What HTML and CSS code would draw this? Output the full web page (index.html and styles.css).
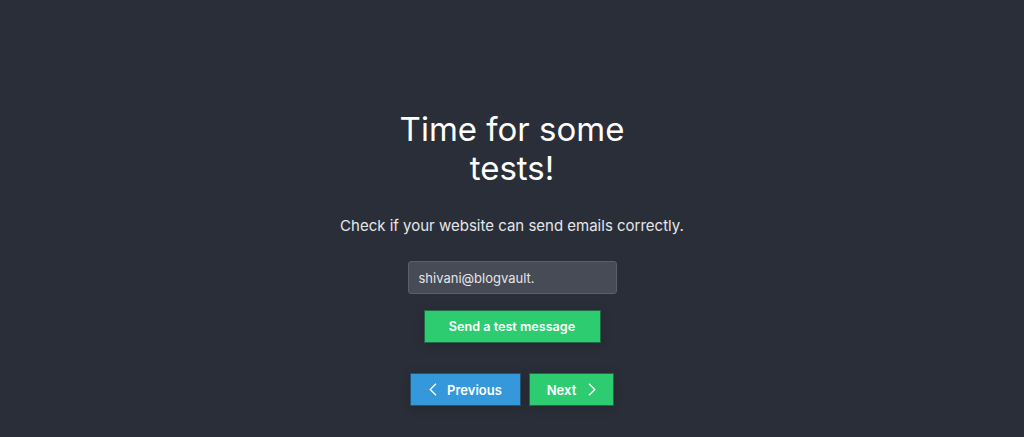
FILE: index.html
```html
<!DOCTYPE html>
<html lang="en">
<head>
<meta charset="utf-8">
<title>Time for some tests!</title>
<link rel="stylesheet" href="styles.css">
</head>
<body>
<main class="step">
  <h1 class="step-title">Time for some tests!</h1>
  <p class="step-text">Check if your website can send emails correctly.</p>
  <input class="email-input" type="text" value="shivani@blogvault.">
  <button class="btn btn-green btn-send" type="button">Send a test message</button>
  <div class="nav">
    <button class="btn btn-blue btn-prev" type="button">
      <svg class="chev" width="8" height="13" viewBox="0 0 8 13" aria-hidden="true"><path d="M7 0.7 L1.2 6.5 L7 12.3" fill="none" stroke="currentColor" stroke-width="1.3"/></svg>
      <span>Previous</span>
    </button>
    <button class="btn btn-green btn-next" type="button">
      <span>Next</span>
      <svg class="chev" width="8" height="13" viewBox="0 0 8 13" aria-hidden="true"><path d="M1 0.7 L6.8 6.5 L1 12.3" fill="none" stroke="currentColor" stroke-width="1.3"/></svg>
    </button>
  </div>
</main>
</body>
</html>
```

FILE: styles.css
```css
html, body {
  margin: 0;
  padding: 0;
  background: #2a2e38;
  height: 100%;
}
body {
  font-family: Inter, "Noto Sans", sans-serif;
  color: #ffffff;
}
.step {
  display: flex;
  flex-direction: column;
  align-items: center;
  padding-top: 110px;
}
.step-title {
  margin: 0;
  width: 250px;
  text-align: center;
  font-size: 33px;
  line-height: 39px;
  font-weight: 400;
  color: #ffffff;
}
.step-text {
  margin: 27px 0 0;
  font-size: 15px;
  line-height: 22px;
  color: #e6e7ea;
}
.email-input {
  box-sizing: border-box;
  margin-top: 24px;
  width: 209px;
  height: 33px;
  padding: 0 10px;
  background: #474b56;
  border: 1px solid #5b5f69;
  border-radius: 3px;
  color: #e4e5e8;
  font-family: inherit;
  font-size: 13px;
  outline: none;
}
.btn {
  box-sizing: border-box;
  height: 33px;
  border: 1px solid rgba(30, 36, 46, 0.6);
  border-radius: 0;
  color: #ffffff;
  font-family: inherit;
  font-weight: 600;
  display: inline-flex;
  align-items: center;
  justify-content: center;
  cursor: pointer;
  box-shadow: 0 2px 10px rgba(0, 0, 0, 0.18);
}
.btn-green { background: #2ecc71; }
.btn-blue { background: #3498db; }
.btn-send {
  margin-top: 16px;
  width: 177px;
  font-size: 12.6px;
}
.nav {
  margin-top: 30px;
  display: flex;
  gap: 8px;
}
.btn-prev {
  width: 111px;
  font-size: 13px;
  gap: 10px;
}
.btn-next {
  width: 85px;
  font-size: 13px;
  gap: 12px;
}
.chev { display: block; }
```
